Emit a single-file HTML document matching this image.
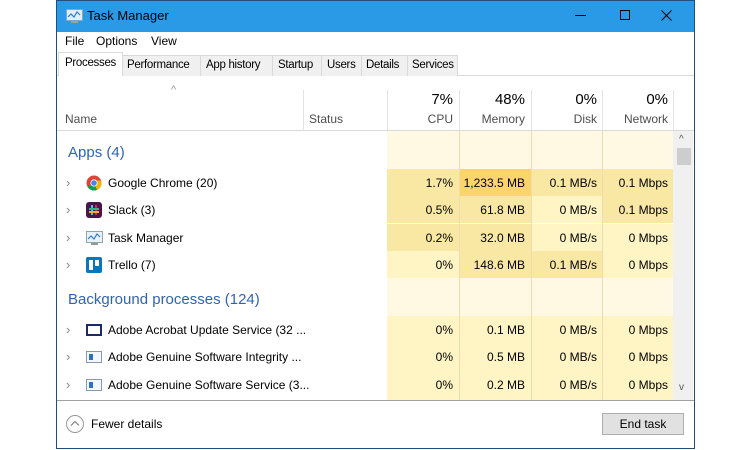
<!DOCTYPE html>
<html><head><meta charset="utf-8"><style>
*{margin:0;padding:0;box-sizing:border-box}
body{width:750px;height:450px;background:#fff;font-family:"Segoe UI","Liberation Sans",sans-serif;font-size:12px;color:#000;position:relative;overflow:hidden}
.a{position:absolute}
.win{left:56px;top:0;width:639px;height:449px;border:1px solid #1f4f7a;background:#fff}
.t{white-space:nowrap}
.r{text-align:right}
.c{position:absolute;height:27px;}
.L{background:#fff4c4}.M{background:#f9e8a4}.O{background:#fcd46c}.G{background:#fff8e3}
.sep{position:absolute;width:1px;background:#ecdcb0}
.hs{position:absolute;width:1px;background:#e3e3e3;top:90px;height:40px}
.chev{color:#888;font-size:13px}
.tab{font-size:11.5px;letter-spacing:-0.3px}
</style></head><body>
<div class="a win">
 <div class="a" style="left:0;top:0;width:637px;height:31px;background:#2b9ae6"></div>
</div>
<!-- title -->
<svg class="a" style="left:66px;top:9px" width="17" height="14" viewBox="0 0 17 14"><rect x="0.5" y="0.5" width="16" height="11" fill="#dfeefa" stroke="#7fa9cc"/><polyline points="2,8 5,5 8,8 11,3 14,6" fill="none" stroke="#3a7bbf" stroke-width="1.2"/><rect x="5" y="12" width="7" height="2" fill="#8aa"/></svg>
<div class="a t" style="left:87px;top:8px;font-size:13px;color:#000">Task Manager</div>
<div class="a" style="left:575px;top:15px;width:11px;height:1px;background:#000"></div>
<div class="a" style="left:620px;top:10px;width:10px;height:10px;border:1px solid #000"></div>
<svg class="a" style="left:661px;top:10px" width="11" height="11" viewBox="0 0 11 11"><path d="M0.5 0.5L10.5 10.5M10.5 0.5L0.5 10.5" stroke="#000" stroke-width="1"/></svg>
<!-- menu -->
<div class="a t" style="left:65px;top:34px">File</div>
<div class="a t" style="left:96px;top:34px">Options</div>
<div class="a t" style="left:151px;top:34px">View</div>
<div class="a" style="left:57px;top:75px;width:637px;height:1px;background:#d9d9d9"></div>
<!-- tabs -->
<div class="a" style="left:122px;top:55px;width:336px;height:21px;background:#f0f0f0;border:1px solid #d9d9d9;border-bottom:none"></div>
<div class="a" style="left:58px;top:52px;width:65px;height:24px;background:#fff;border:1px solid #d9d9d9;border-bottom:none"></div>
<div class="a t tab" style="left:65px;top:57px">Processes</div>
<div class="a t tab" style="left:127px;top:59px">Performance</div>
<div class="a" style="left:200px;top:56px;width:1px;height:20px;background:#d9d9d9"></div>
<div class="a t tab" style="left:206px;top:59px">App history</div>
<div class="a" style="left:272px;top:56px;width:1px;height:20px;background:#d9d9d9"></div>
<div class="a t tab" style="left:278px;top:59px">Startup</div>
<div class="a" style="left:321px;top:56px;width:1px;height:20px;background:#d9d9d9"></div>
<div class="a t tab" style="left:327px;top:59px">Users</div>
<div class="a" style="left:361px;top:56px;width:1px;height:20px;background:#d9d9d9"></div>
<div class="a t tab" style="left:366px;top:59px">Details</div>
<div class="a" style="left:407px;top:56px;width:1px;height:20px;background:#d9d9d9"></div>
<div class="a t tab" style="left:412px;top:59px">Services</div>
<!-- header -->
<div class="a t" style="left:171px;top:84px;color:#999;font-size:11px">^</div>
<div class="a t" style="left:65px;top:112px;color:#4d4d4d">Name</div>
<div class="hs" style="left:303px"></div>
<div class="a t" style="left:309px;top:112px;color:#4d4d4d">Status</div>
<div class="hs" style="left:387px"></div>
<div class="hs" style="left:459px"></div>
<div class="hs" style="left:531px"></div>
<div class="hs" style="left:602px"></div>
<div class="hs" style="left:673px"></div>
<div class="a r" style="left:387px;width:66px;top:91px;font-size:15px">7%</div>
<div class="a r" style="left:387px;width:66px;top:112px;color:#4d4d4d">CPU</div>
<div class="a r" style="left:459px;width:66px;top:91px;font-size:15px">48%</div>
<div class="a r" style="left:459px;width:66px;top:112px;color:#4d4d4d">Memory</div>
<div class="a r" style="left:531px;width:66px;top:91px;font-size:15px">0%</div>
<div class="a r" style="left:531px;width:66px;top:112px;color:#4d4d4d">Disk</div>
<div class="a r" style="left:602px;width:66px;top:91px;font-size:15px">0%</div>
<div class="a r" style="left:602px;width:66px;top:112px;color:#4d4d4d">Network</div>
<div class="a" style="left:57px;top:130px;width:637px;height:1px;background:#d9d9d9"></div>
<!-- data cells background -->
<div class="c G" style="left:387px;top:131px;width:286px;height:38px"></div>
<div class="c M" style="left:387px;top:169px;width:72px"></div><div class="c O" style="left:459px;top:169px;width:72px"></div><div class="c M" style="left:531px;top:169px;width:71px"></div><div class="c M" style="left:602px;top:169px;width:71px"></div>
<div class="c M" style="left:387px;top:196px;width:72px"></div><div class="c M" style="left:459px;top:196px;width:72px"></div><div class="c L" style="left:531px;top:196px;width:71px"></div><div class="c M" style="left:602px;top:196px;width:71px"></div>
<div class="c M" style="left:387px;top:224px;width:72px"></div><div class="c M" style="left:459px;top:224px;width:72px"></div><div class="c L" style="left:531px;top:224px;width:71px"></div><div class="c L" style="left:602px;top:224px;width:71px"></div>
<div class="c L" style="left:387px;top:251px;width:72px"></div><div class="c M" style="left:459px;top:251px;width:72px"></div><div class="c M" style="left:531px;top:251px;width:71px"></div><div class="c L" style="left:602px;top:251px;width:71px"></div>
<div class="c G" style="left:387px;top:278px;width:286px;height:38px"></div>
<div class="c L" style="left:387px;top:316px;width:286px;height:84px"></div>
<div class="sep" style="left:459px;top:131px;height:269px"></div>
<div class="sep" style="left:531px;top:131px;height:269px"></div>
<div class="sep" style="left:602px;top:131px;height:269px"></div>
<!-- scrollbar -->
<div class="a" style="left:673px;top:131px;width:20px;height:269px;background:#f0f0f0"></div>
<div class="a t" style="left:679px;top:134px;font-size:10px;color:#555">^</div>
<div class="a" style="left:677px;top:148px;width:14px;height:17px;background:#cdcdcd"></div>
<div class="a t" style="left:679px;top:382px;font-size:10px;color:#555">v</div>
<!-- groups -->
<div class="a t" style="left:68px;top:144px;font-size:15px;color:#2f64b4">Apps (4)</div>
<div class="a t" style="left:68px;top:291px;font-size:15px;color:#2f64b4">Background processes (124)</div>
<!-- rows -->
<div class="a t chev" style="left:66px;top:175px">›</div>
<svg class="a" style="left:86px;top:175px" width="16" height="16" viewBox="0 0 16 16"><circle cx="8" cy="8" r="7.5" fill="#db4437"/><path d="M8 8 L1.5 11.8 A7.5 7.5 0 0 0 11 14.9Z" fill="#0f9d58"/><path d="M8 8 L11 14.9 A7.5 7.5 0 0 0 15 5.5 L8 5.5Z" fill="#f4b400"/><circle cx="8" cy="8" r="3.6" fill="#fff"/><circle cx="8" cy="8" r="2.8" fill="#4285f4"/></svg>
<div class="a t" style="left:108px;top:176px">Google Chrome (20)</div>
<div class="a t chev" style="left:66px;top:202px">›</div>
<div class="a" style="left:86px;top:202px;width:16px;height:16px;background:#4a154b;border-radius:3px"></div>
<div class="a" style="left:91px;top:205px;width:2px;height:10px;background:#36c5f0"></div><div class="a" style="left:95px;top:205px;width:2px;height:10px;background:#e01e5a"></div><div class="a" style="left:89px;top:208px;width:10px;height:2px;background:#2eb67d"></div><div class="a" style="left:89px;top:211px;width:10px;height:2px;background:#ecb22e"></div>
<div class="a t" style="left:108px;top:203px">Slack (3)</div>
<div class="a t chev" style="left:66px;top:230px">›</div>
<svg class="a" style="left:86px;top:231px" width="17" height="14" viewBox="0 0 17 14"><rect x="0.5" y="0.5" width="16" height="11" fill="#e8f1f8" stroke="#8aa"/><polyline points="2,8 5,5 8,8 11,3 14,6" fill="none" stroke="#3a7bbf" stroke-width="1.2"/><rect x="5" y="12" width="7" height="2" fill="#999"/></svg>
<div class="a t" style="left:108px;top:231px">Task Manager</div>
<div class="a t chev" style="left:66px;top:257px">›</div>
<div class="a" style="left:86px;top:257px;width:16px;height:16px;background:#0079bf;border-radius:2px"></div>
<div class="a" style="left:89px;top:260px;width:4px;height:10px;background:#fff"></div><div class="a" style="left:95px;top:260px;width:4px;height:6px;background:#fff"></div>
<div class="a t" style="left:108px;top:258px">Trello (7)</div>
<div class="a t chev" style="left:66px;top:322px">›</div>
<div class="a" style="left:86px;top:324px;width:16px;height:12px;border:2px solid #1a2a6c"></div>
<div class="a t" style="left:108px;top:323px">Adobe Acrobat Update Service (32 ...</div>
<div class="a t chev" style="left:66px;top:349px">›</div>
<div class="a" style="left:86px;top:351px;width:16px;height:12px;border:1px solid #8a9aae;background:#f4f7fb"></div><div class="a" style="left:89px;top:354px;width:4px;height:6px;background:#2f6fc7"></div>
<div class="a t" style="left:108px;top:350px">Adobe Genuine Software Integrity ...</div>
<div class="a t chev" style="left:66px;top:377px">›</div>
<div class="a" style="left:86px;top:379px;width:16px;height:12px;border:1px solid #8a9aae;background:#f4f7fb"></div><div class="a" style="left:89px;top:382px;width:4px;height:6px;background:#2f6fc7"></div>
<div class="a t" style="left:108px;top:378px">Adobe Genuine Software Service (3...</div>
<!-- values -->
<div class="a r" style="left:387px;width:66px;top:176px">1.7%</div><div class="a r" style="left:459px;width:66px;top:176px">1,233.5 MB</div><div class="a r" style="left:531px;width:66px;top:176px">0.1 MB/s</div><div class="a r" style="left:602px;width:66px;top:176px">0.1 Mbps</div>
<div class="a r" style="left:387px;width:66px;top:203px">0.5%</div><div class="a r" style="left:459px;width:66px;top:203px">61.8 MB</div><div class="a r" style="left:531px;width:66px;top:203px">0 MB/s</div><div class="a r" style="left:602px;width:66px;top:203px">0.1 Mbps</div>
<div class="a r" style="left:387px;width:66px;top:231px">0.2%</div><div class="a r" style="left:459px;width:66px;top:231px">32.0 MB</div><div class="a r" style="left:531px;width:66px;top:231px">0 MB/s</div><div class="a r" style="left:602px;width:66px;top:231px">0 Mbps</div>
<div class="a r" style="left:387px;width:66px;top:258px">0%</div><div class="a r" style="left:459px;width:66px;top:258px">148.6 MB</div><div class="a r" style="left:531px;width:66px;top:258px">0.1 MB/s</div><div class="a r" style="left:602px;width:66px;top:258px">0 Mbps</div>
<div class="a r" style="left:387px;width:66px;top:323px">0%</div><div class="a r" style="left:459px;width:66px;top:323px">0.1 MB</div><div class="a r" style="left:531px;width:66px;top:323px">0 MB/s</div><div class="a r" style="left:602px;width:66px;top:323px">0 Mbps</div>
<div class="a r" style="left:387px;width:66px;top:350px">0%</div><div class="a r" style="left:459px;width:66px;top:350px">0.5 MB</div><div class="a r" style="left:531px;width:66px;top:350px">0 MB/s</div><div class="a r" style="left:602px;width:66px;top:350px">0 Mbps</div>
<div class="a r" style="left:387px;width:66px;top:378px">0%</div><div class="a r" style="left:459px;width:66px;top:378px">0.2 MB</div><div class="a r" style="left:531px;width:66px;top:378px">0 MB/s</div><div class="a r" style="left:602px;width:66px;top:378px">0 Mbps</div>
<!-- footer -->
<div class="a" style="left:57px;top:400px;width:637px;height:1px;background:#a0a0a0"></div>
<div class="a" style="left:66px;top:415px;width:18px;height:18px;border:1px solid #999;border-radius:50%"></div>
<svg class="a" style="left:70px;top:420px" width="10" height="7" viewBox="0 0 10 7"><path d="M1 5.5L5 1.5L9 5.5" fill="none" stroke="#777" stroke-width="1"/></svg>
<div class="a t" style="left:91px;top:417px">Fewer details</div>
<div class="a" style="left:602px;top:413px;width:82px;height:22px;background:#e1e1e1;border:1px solid #adadad"></div>
<div class="a t r" style="left:602px;width:82px;text-align:center;top:417px">End task</div>
</body></html>
